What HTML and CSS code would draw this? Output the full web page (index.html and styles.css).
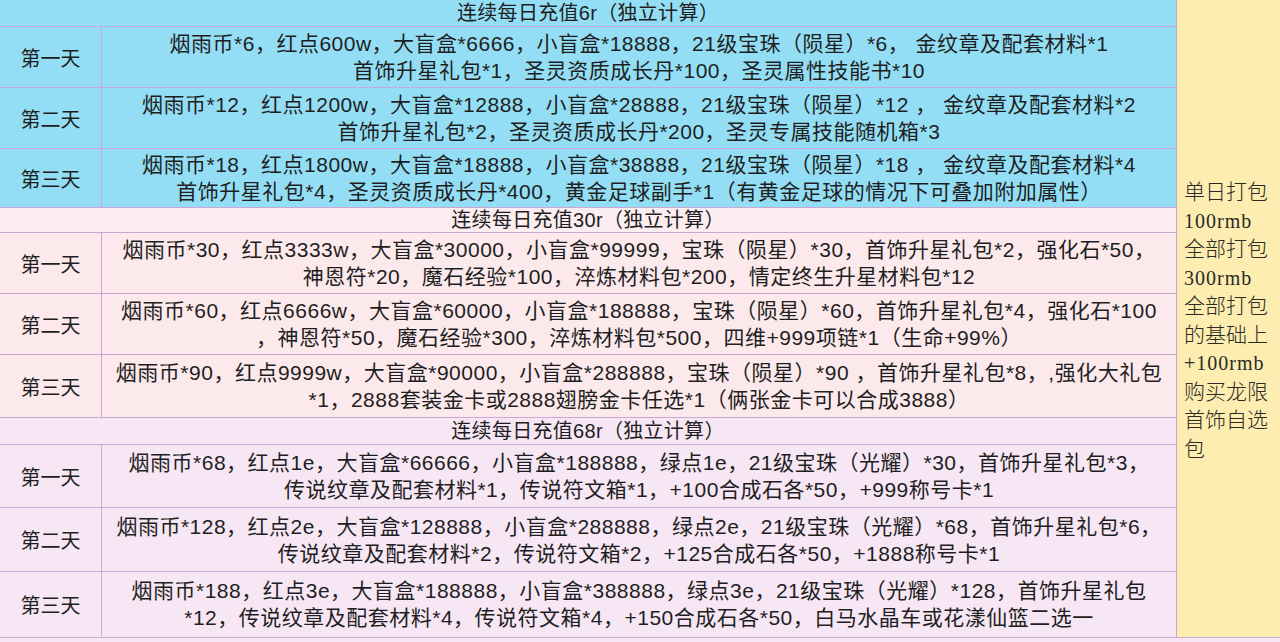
FILE: index.html
```html
<!DOCTYPE html>
<html lang="zh-CN">
<head>
<meta charset="utf-8">
<title>连续每日充值</title>
<link rel="stylesheet" href="styles.css">
</head>
<body>
<div class="sheet">
  <div class="main">
    <section class="sec sec-blue">
      <div class="head">连续每日充值6r（独立计算）</div>
      <div class="row">
        <div class="day">第一天</div>
        <div class="items">烟雨币*6，红点600w，大盲盒*6666，小盲盒*18888，21级宝珠（陨星）*6， 金纹章及配套材料*1<br>首饰升星礼包*1，圣灵资质成长丹*100，圣灵属性技能书*10</div>
      </div>
      <div class="row">
        <div class="day">第二天</div>
        <div class="items">烟雨币*12，红点1200w，大盲盒*12888，小盲盒*28888，21级宝珠（陨星）*12 ， 金纹章及配套材料*2<br>首饰升星礼包*2，圣灵资质成长丹*200，圣灵专属技能随机箱*3</div>
      </div>
      <div class="row short">
        <div class="day">第三天</div>
        <div class="items">烟雨币*18，红点1800w，大盲盒*18888，小盲盒*38888，21级宝珠（陨星）*18 ， 金纹章及配套材料*4<br>首饰升星礼包*4，圣灵资质成长丹*400，黄金足球副手*1（有黄金足球的情况下可叠加附加属性）</div>
      </div>
    </section>
    <section class="sec sec-pink">
      <div class="head thin">连续每日充值30r（独立计算）</div>
      <div class="row">
        <div class="day">第一天</div>
        <div class="items">烟雨币*30，红点3333w，大盲盒*30000，小盲盒*99999，宝珠（陨星）*30，首饰升星礼包*2，强化石*50，<br>神恩符*20，魔石经验*100，淬炼材料包*200，情定终生升星材料包*12</div>
      </div>
      <div class="row">
        <div class="day">第二天</div>
        <div class="items">烟雨币*60，红点6666w，大盲盒*60000，小盲盒*188888，宝珠（陨星）*60，首饰升星礼包*4，强化石*100<br>，神恩符*50，魔石经验*300，淬炼材料包*500，四维+999项链*1（生命+99%）</div>
      </div>
      <div class="row tall">
        <div class="day">第三天</div>
        <div class="items">烟雨币*90，红点9999w，大盲盒*90000，小盲盒*288888，宝珠（陨星）*90 ，首饰升星礼包*8，,强化大礼包<br>*1，2888套装金卡或2888翅膀金卡任选*1（俩张金卡可以合成3888）</div>
      </div>
    </section>
    <section class="sec sec-lilac">
      <div class="head">连续每日充值68r（独立计算）</div>
      <div class="row tall">
        <div class="day">第一天</div>
        <div class="items">烟雨币*68，红点1e，大盲盒*66666，小盲盒*188888，绿点1e，21级宝珠（光耀）*30，首饰升星礼包*3，<br>传说纹章及配套材料*1，传说符文箱*1，+100合成石各*50，+999称号卡*1</div>
      </div>
      <div class="row taller">
        <div class="day">第二天</div>
        <div class="items">烟雨币*128，红点2e，大盲盒*128888，小盲盒*288888，绿点2e，21级宝珠（光耀）*68，首饰升星礼包*6，<br>传说纹章及配套材料*2，传说符文箱*2，+125合成石各*50，+1888称号卡*1</div>
      </div>
      <div class="row taller">
        <div class="day">第三天</div>
        <div class="items">烟雨币*188，红点3e，大盲盒*188888，小盲盒*388888，绿点3e，21级宝珠（光耀）*128，首饰升星礼包<br>*12，传说纹章及配套材料*4，传说符文箱*4，+150合成石各*50，白马水晶车或花漾仙篮二选一</div>
      </div>
    </section>
  </div>
  <aside class="side">
    <p class="note">单日打包<br><span class="lat">100rmb</span><br>全部打包<br><span class="lat">300rmb</span><br>全部打包<br>的基础上<br><span class="lat">+100rmb</span><br>购买龙限<br>首饰自选<br>包</p>
  </aside>
</div>
</body>
</html>
```

FILE: styles.css
```css
html, body {
  margin: 0;
  padding: 0;
}
body {
  width: 1280px;
  height: 642px;
  overflow: hidden;
  background: #f7e6f4;
  font-family: "Liberation Sans", "Noto Sans CJK SC", sans-serif;
  color: #1e1e22;
}
.sheet {
  display: flex;
  height: 637px;
  border-bottom: 1px solid #c9a8d6;
}
.main {
  width: 1176px;
  display: flex;
  flex-direction: column;
}
.sec-blue { background: #93def5; }
.sec-pink { background: #fbe9ec; }
.sec-lilac { background: #f7e6f4; }
.sec-pink .head { background: #fcedf0; }
.head {
  height: 27px;
  box-sizing: border-box;
  border-bottom: 1px solid #c9a8d6;
  text-align: center;
  font-size: 20px;
  line-height: 26px;
  white-space: nowrap;
  letter-spacing: 0.3px;
}
.head.thin {
  height: 25px;
  line-height: 24px;
}
.row {
  display: grid;
  grid-template-columns: 102px 1fr;
  height: 61px;
  box-sizing: border-box;
  border-bottom: 1px solid #c9a8d6;
}
.row.short { height: 59px; }
.row.tall { height: 63px; }
.row.taller { height: 64px; }
.sec-lilac .row:last-child { border-bottom: none; }
.day {
  display: flex;
  align-items: center;
  justify-content: center;
  border-right: 1px solid #c9a8d6;
  font-size: 20px;
}
.items {
  display: flex;
  align-items: center;
  justify-content: center;
  text-align: center;
  font-size: 21px;
  line-height: 27px;
  white-space: nowrap;
  letter-spacing: 0.5px;
}
.side {
  flex: 1;
  background: #fdedb1;
  border-left: 1px solid #c9a8d6;
  display: flex;
  align-items: center;
  padding-left: 7px;
}
.note {
  margin: 0;
  margin-top: 4px;
  font-size: 21px;
  line-height: 28.5px;
  font-family: "Liberation Serif", "Noto Sans CJK SC", sans-serif;
  font-weight: 300;
  color: #2a2a26;
}
.lat {
  font-family: "Liberation Serif", serif;
  font-size: 20px;
  letter-spacing: 1px;
}
```
